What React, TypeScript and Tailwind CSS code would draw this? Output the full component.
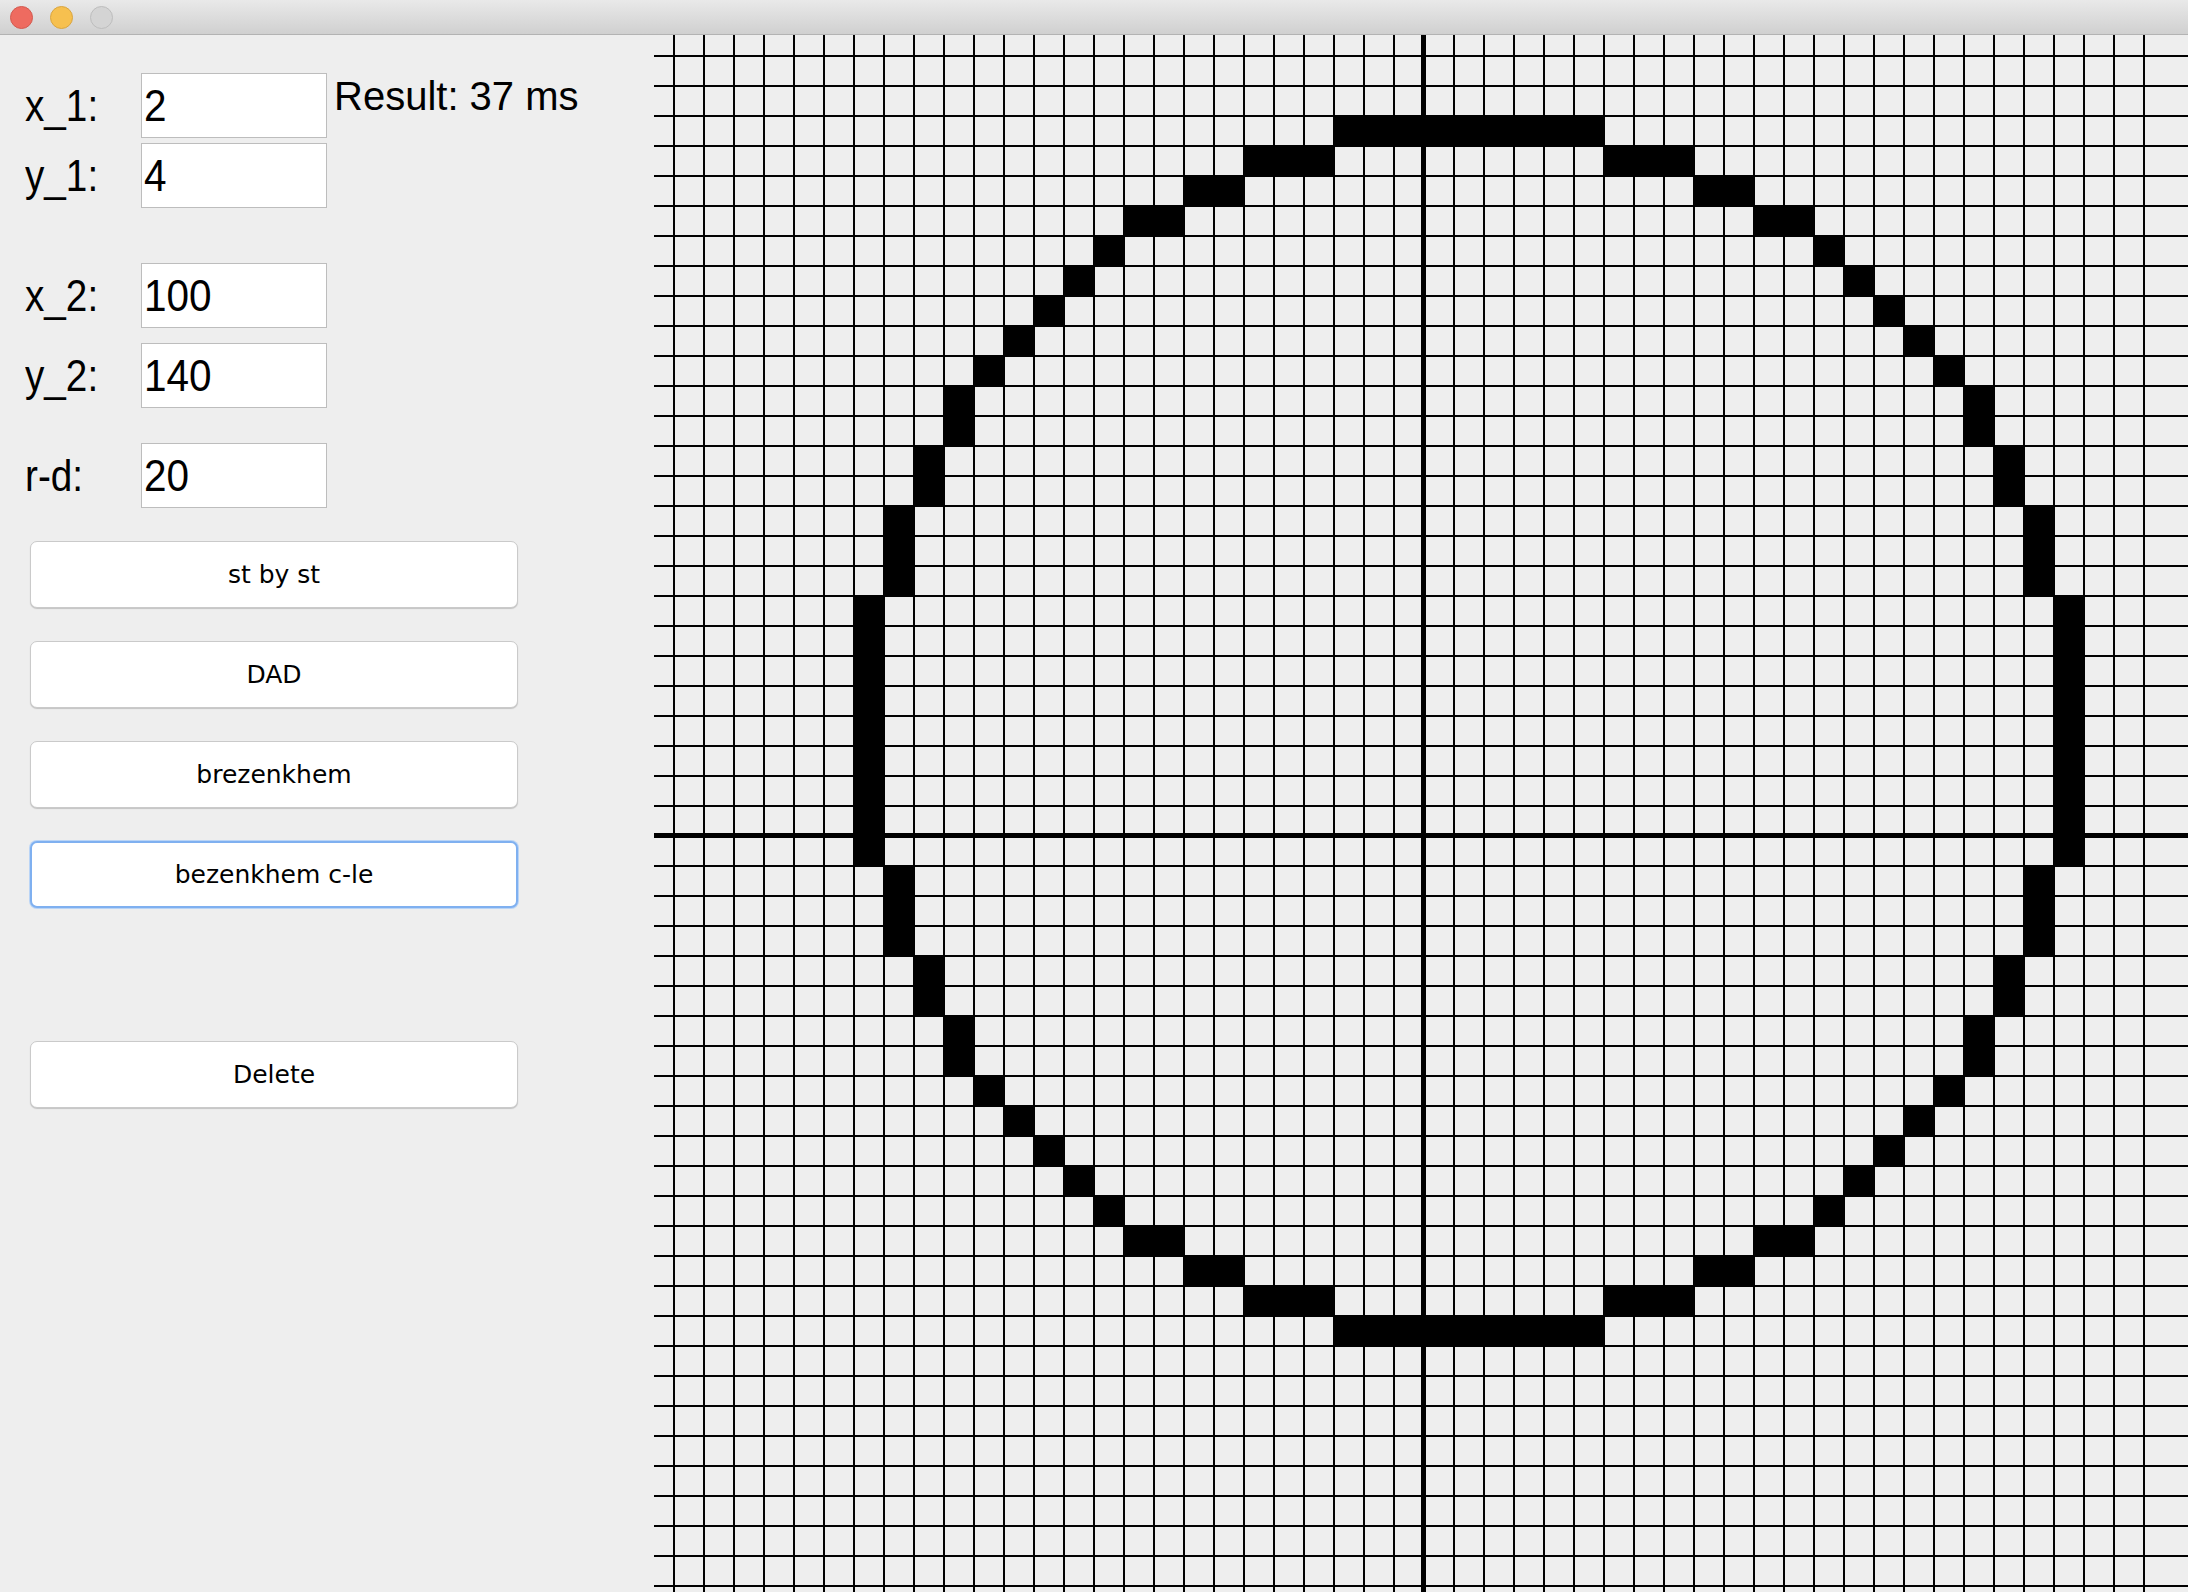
import React from 'react'

// canvas geometry (px, relative to the drawing panel)
const CANVAS_W = 1534
const CANVAS_H = 1557
const CELL = 30
const OX = 19 // first vertical grid line
const OY = 20 // first horizontal grid line
const COLS = 50
const ROWS = 52

// midpoint circle, in grid cells
function circleCells(cx: number, cy: number, r: number) {
  const out: [number, number][] = []
  let x = 0
  let y = r
  let d = 1 - r
  while (x <= y) {
    const pts: [number, number][] = [
      [x, y], [y, x], [-x, y], [-y, x],
      [x, -y], [y, -x], [-x, -y], [-y, -x],
    ]
    for (const [dx, dy] of pts) out.push([cx + dx, cy + dy])
    if (d < 0) {
      d += 2 * x + 3
    } else {
      d += 2 * (x - y) + 5
      y--
    }
    x++
  }
  return out
}

const cells = circleCells(26, 22, 20)

function TitleBar() {
  return (
    <div className="h-[35px] shrink-0 flex items-center gap-[17px] pl-[10px] bg-linear-to-b from-[#e9e9e9] to-[#d0d0d0] border-b border-[#b3b3b3]">
      <span className="w-[23px] h-[23px] rounded-full bg-[#ee6b60] border border-[#d35a4f]" />
      <span className="w-[23px] h-[23px] rounded-full bg-[#f6c04f] border border-[#d9a540]" />
      <span className="w-[23px] h-[23px] rounded-full bg-[#d4d4d4] border border-[#bdbdbd]" />
    </div>
  )
}

interface FieldRowProps {
  label: string
  value: string
  className?: string
  children?: React.ReactNode
}

function FieldRow({ label, value, className, children }: FieldRowProps) {
  return (
    <div className={`flex h-[65px] items-center ${className ?? ''}`}>
      <div className="w-[141px] pl-[25px] text-[45px] leading-none text-black">
        <span className="inline-block origin-left scale-x-[0.86]">{label}</span>
      </div>
      <div className="w-[186px] h-full bg-white border border-[#bdbdbd] flex items-center pl-[2px] text-[45px] leading-none text-black">
        <span className="inline-block origin-left scale-x-[0.9]">{value}</span>
      </div>
      {children}
    </div>
  )
}

function Btn({ children, focused }: { children: React.ReactNode; focused?: boolean }) {
  return (
    <button
      className={
        focused
          ? 'h-[67px] w-full rounded-[7px] bg-white border-2 border-[#7fb0f0] shadow-[0_0_0_1px_#b9d4f6] text-[25px] text-black font-["DejaVu_Sans",sans-serif]'
          : 'h-[67px] w-full rounded-[7px] bg-white border border-[#cacaca] shadow-[0_1px_1px_rgba(0,0,0,0.18)] text-[25px] text-black font-["DejaVu_Sans",sans-serif]'
      }
    >
      {children}
    </button>
  )
}

function Controls() {
  return (
    <div className="w-[654px] shrink-0 flex flex-col pt-[38px] font-['Liberation_Sans',Arial,sans-serif]">
      <FieldRow label="x_1:" value="2">
        <span className="self-start ml-[7px] mt-[3px] text-[40px] leading-none text-black">Result: 37 ms</span>
      </FieldRow>
      <FieldRow className="mt-[5px]" label="y_1:" value="4" />
      <FieldRow className="mt-[55px]" label="x_2:" value="100" />
      <FieldRow className="mt-[15px]" label="y_2:" value="140" />
      <FieldRow className="mt-[35px]" label="r-d:" value="20" />
      <div className="mt-[33px] ml-[30px] w-[488px] flex flex-col gap-[33px]">
        <Btn>st by st</Btn>
        <Btn>DAD</Btn>
        <Btn>brezenkhem</Btn>
        <Btn focused>bezenkhem c-le</Btn>
        <div className="mt-[100px]">
          <Btn>Delete</Btn>
        </div>
      </div>
    </div>
  )
}

function PixelCanvas() {
  return (
    <div className="flex-1 overflow-hidden">
      <svg width={CANVAS_W} height={CANVAS_H} shapeRendering="crispEdges" className="block">
        {Array.from({ length: ROWS }, (_, k) => (
          <rect key={'h' + k} x={0} y={OY + CELL * k} width={CANVAS_W} height={2} fill="#000" />
        ))}
        {Array.from({ length: COLS }, (_, k) => (
          <rect key={'v' + k} x={OX + CELL * k} y={0} width={2} height={CANVAS_H} fill="#000" />
        ))}
        {cells.map(([c, r], i) => (
          <rect key={'c' + i} x={OX + CELL * c} y={OY + CELL * r} width={CELL} height={CELL} fill="#000" />
        ))}
        {/* axes */}
        <rect x={OX + CELL * 25 - 2} y={0} width={5} height={CANVAS_H} fill="#000" />
        <rect x={0} y={OY + CELL * 26 - 2} width={CANVAS_W} height={5} fill="#000" />
      </svg>
    </div>
  )
}

export default function App() {
  return (
    <div className="w-[2188px] h-[1592px] flex flex-col bg-[#eeeeee] overflow-hidden">
      <TitleBar />
      <div className="flex flex-1 min-h-0">
        <Controls />
        <PixelCanvas />
      </div>
    </div>
  )
}
